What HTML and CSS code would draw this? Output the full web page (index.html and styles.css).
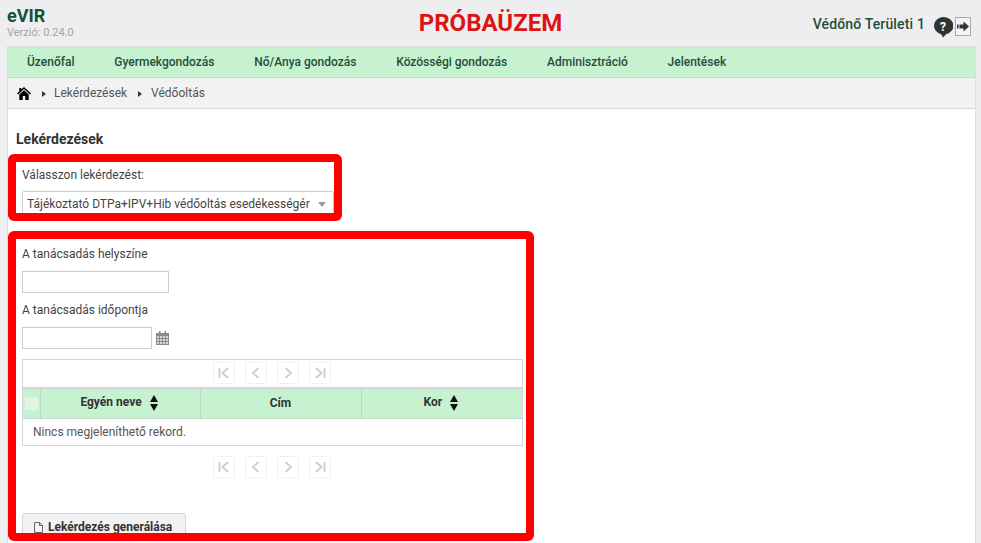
FILE: index.html
```html
<!DOCTYPE html>
<html lang="en">
<head>
    <meta charset="UTF-8">
    <meta name="viewport" content="width=device-width, initial-scale=1.0">
    <title>eVIR</title>
    <link rel="stylesheet" href="styles.css">
</head>
<body>
    <header class="top">
        <div class="brand">
            <div class="brand-name">eVIR</div>
            <div class="brand-version">Verzió: 0.24.0</div>
        </div>
        <div class="env">PRÓBAÜZEM</div>
        <div class="user">
            <span class="user-name">Védőnő Területi 1</span>
            <svg class="help" width="20" height="22" viewBox="0 0 20 22">
                <path d="M10 1a10 8.800 0 0 1 3 17.300L10 21.500l-1.800-3.300A10 8.800 0 0 1 10 1z" fill="#333"/>
                <text x="10" y="14.500" text-anchor="middle" class="help-mark">?</text>
            </svg>
            <span class="logout">
                <svg width="12" height="11" viewBox="0 0 12 11"><path d="M0 3.500h1.500v4H0zM2.500 3.500h4V.5L12 5.500l-5.500 5v-3h-4z" fill="#333"/></svg>
            </span>
        </div>
    </header>
    <div class="frame">
        <nav class="menu">
            <a>Üzenőfal</a>
            <a>Gyermekgondozás</a>
            <a>Nő/Anya gondozás</a>
            <a>Közösségi gondozás</a>
            <a>Adminisztráció</a>
            <a>Jelentések</a>
        </nav>
        <div class="crumbs">
            <svg width="14" height="13" viewBox="0 0 14 13"><path d="M7 0 14 6.500l-1 1L7 2 1 7.500l-1-1 2.300-2.200V1h2v1.400zM7 3.200l4.700 4.200V13H8.300V9H5.700v4H2.300V7.400z" fill="#000"/></svg>
            <span class="crumb-arrow"></span>
            <span>Lekérdezések</span>
            <span class="crumb-arrow crumb-arrow-last"></span>
            <span>Védőoltás</span>
        </div>
        <main class="content">
            <h2 class="title">Lekérdezések</h2>
            <section class="mark mark-select">
                <label class="field-label">Válasszon lekérdezést:</label>
                <div class="select">
                    <span>Tájékoztató DTPa+IPV+Hib védőoltás esedékességér</span>
                    <i class="select-arrow"></i>
                </div>
            </section>
            <section class="mark mark-form">
                <label class="field-label">A tanácsadás helyszíne</label>
                <input class="text-input" type="text">
                <label class="field-label second">A tanácsadás időpontja</label>
                <div class="date-row">
                    <input class="text-input date-input" type="text">
                    <svg width="13" height="14" viewBox="0 0 13 14">
                        <path d="M0 2h13v12H0z" fill="#8a8a8a"/>
                        <path d="M3 0h1.500v3H3zM8.500 0H10v3H8.500z" fill="#8a8a8a"/>
                        <path d="M1 5h2v2H1zM4 5h2v2H4zM7 5h2v2H7zM10 5h2v2h-2zM1 8h2v2H1zM4 8h2v2H4zM7 8h2v2H7zM10 8h2v2h-2zM1 11h2v2H1zM4 11h2v2H4zM7 11h2v2H7zM10 11h2v2h-2z" fill="#d8d8d8"/>
                    </svg>
                </div>
                <div class="grid">
                    <div class="pager">
                        <span class="page-btn"><svg width="14" height="12" viewBox="0 0 14 12"><path d="M2.500 1v10M11 1 5.500 6l5.500 5" /></svg></span>
                        <span class="page-btn"><svg width="14" height="12" viewBox="0 0 14 12"><path d="M9.500 1 4 6l5.500 5" /></svg></span>
                        <span class="page-btn"><svg width="14" height="12" viewBox="0 0 14 12"><path d="M4.500 1 10 6l-5.500 5" /></svg></span>
                        <span class="page-btn"><svg width="14" height="12" viewBox="0 0 14 12"><path d="M11.500 1v10M3 1l5.500 5L3 11" /></svg></span>
                    </div>
                    <table class="records">
                        <thead>
                            <tr>
                                <th class="col-check"><i class="check"></i></th>
                                <th class="col-name sortable">Egyén neve <svg class="sort" width="8" height="16" viewBox="0 0 8 16"><path d="M4 0 8 7H0zM0 9h8l-4 7z" fill="#111"/></svg></th>
                                <th class="col-addr">Cím</th>
                                <th class="sortable">Kor <svg class="sort" width="8" height="16" viewBox="0 0 8 16"><path d="M4 0 8 7H0zM0 9h8l-4 7z" fill="#111"/></svg></th>
                            </tr>
                        </thead>
                        <tbody>
                            <tr><td colspan="4">Nincs megjeleníthető rekord.</td></tr>
                        </tbody>
                    </table>
                </div>
                <div class="pager pager-bottom">
                    <span class="page-btn"><svg width="14" height="12" viewBox="0 0 14 12"><path d="M2.500 1v10M11 1 5.500 6l5.500 5" /></svg></span>
                    <span class="page-btn"><svg width="14" height="12" viewBox="0 0 14 12"><path d="M9.500 1 4 6l5.500 5" /></svg></span>
                    <span class="page-btn"><svg width="14" height="12" viewBox="0 0 14 12"><path d="M4.500 1 10 6l-5.500 5" /></svg></span>
                    <span class="page-btn"><svg width="14" height="12" viewBox="0 0 14 12"><path d="M11.500 1v10M3 1l5.500 5L3 11" /></svg></span>
                </div>
                <button class="generate">
                    <svg width="9" height="11" viewBox="0 0 9 11"><path d="M.5.500h5l3 3v7H.5zM5.500.500v3h3" fill="none" stroke="#666"/></svg>
                    Lekérdezés generálása
                </button>
            </section>
        </main>
    </div>
</body>
</html>
```

FILE: styles.css
```css
* {
    margin: 0;
    padding: 0;
    box-sizing: border-box;
}
html, body {
    height: 100%;
    overflow: hidden;
}
body {
    display: flex;
    flex-direction: column;
    font-family: Roboto, "Liberation Sans", sans-serif;
    font-size: 12px;
    color: #444;
    background-color: #eeeef0;
}
.top {
    height: 46px;
    flex: none;
    display: grid;
    grid-template-columns: 1fr auto 1fr;
    align-items: start;
    padding: 0 10px 0 7px;
}
.brand-name {
    margin-top: 7px;
    font-size: 18px;
    line-height: 18px;
    font-weight: 700;
    color: #14503a;
}
.brand-version {
    margin-top: 1px;
    font-size: 11px;
    line-height: 13px;
    color: #a3a3a3;
}
.env {
    margin: 9px 0 0 3px;
    font-size: 24px;
    line-height: 28px;
    font-weight: 700;
    color: #dd1414;
}
.user {
    display: flex;
    justify-content: flex-end;
    align-items: flex-start;
    padding-top: 16px;
}
.user-name {
    margin-right: 8px;
    font-size: 14px;
    line-height: 17px;
    font-weight: 500;
    letter-spacing: 0.15px;
    color: #1f4f3a;
}
.help-mark {
    font-family: Roboto, sans-serif;
    font-size: 12px;
    font-weight: 700;
    fill: #fff;
}
.logout {
    width: 16px;
    height: 19px;
    margin: 1px 0 0 2px;
    display: flex;
    align-items: center;
    justify-content: center;
    background-color: #f4f4f5;
    border: 1px solid #aaa;
}
.frame {
    flex: 1;
    margin: 0 5px 0 7px;
    display: flex;
    flex-direction: column;
    background-color: #fff;
    border: 1px solid #ddd;
    border-bottom: none;
}
.menu {
    height: 31px;
    flex: none;
    display: flex;
    align-items: center;
    gap: 39.800px;
    padding-left: 19px;
    background-color: #c6f2d0;
    border-bottom: 1px solid #c8d8cc;
}
.menu a {
    font-size: 12px;
    font-weight: 500;
    color: #1f4f3a;
}
.crumbs {
    height: 31px;
    flex: none;
    display: flex;
    align-items: center;
    gap: 8px;
    padding-left: 9px;
    color: #555;
    background-color: #f2f2f3;
    border-bottom: 1px solid #d9d9d9;
}
.crumb-arrow {
    width: 0;
    height: 0;
    margin: 1px 0 0 3px;
    border-left: 4px solid #333;
    border-top: 3.500px solid transparent;
    border-bottom: 3.500px solid transparent;
}
.crumb-arrow-last {
    margin-right: 1px;
}
.content {
    flex: 1;
    min-height: 0;
}
.title {
    margin: 22px 0 6px 8px;
    font-size: 14px;
    line-height: 17px;
    font-weight: 700;
    color: #333;
}
.mark {
    overflow: hidden;
    border: 8px solid #fe0000;
    border-radius: 6px;
    padding: 5px 0 0 6px;
}
.mark-select {
    width: 334px;
    height: 67px;
}
.mark-form {
    width: 526px;
    height: 310px;
    margin-top: 10px;
    padding-top: 7px;
}
.field-label {
    display: block;
    font-size: 12px;
    line-height: 17px;
    color: #444;
}
.field-label.second {
    margin-top: 9px;
}
.select {
    width: 312px;
    height: 26px;
    margin-top: 7px;
    display: flex;
    align-items: center;
    justify-content: space-between;
    padding: 0 7px 0 4px;
    font-size: 12px;
    border: 1px solid #ccc;
    border-radius: 2px;
}
.select-arrow {
    width: 0;
    height: 0;
    border-top: 5px solid #999;
    border-left: 4.500px solid transparent;
    border-right: 4.500px solid transparent;
}
.text-input {
    display: block;
    width: 147px;
    height: 22px;
    margin-top: 8px;
    border: 1px solid #ccc;
}
.date-row {
    display: flex;
    align-items: center;
    gap: 4px;
    margin-top: 8px;
}
.date-input {
    width: 130px;
    margin-top: 0;
}
.grid {
    width: 501px;
    margin-top: 10px;
    border: 1px solid #d5d5d5;
}
.pager {
    height: 27px;
    display: flex;
    justify-content: center;
    align-items: flex-start;
    gap: 10px;
    padding: 2px 2px 0 0;
}
.pager svg {
    fill: none;
    stroke: #ccc;
    stroke-width: 1.800;
}
.page-btn {
    width: 22px;
    height: 22px;
    display: flex;
    align-items: center;
    justify-content: center;
    border: 1px solid #f0f0f0;
    border-radius: 2px;
}
.pager-bottom {
    width: 501px;
    height: 22px;
    margin-top: 10px;
    padding-top: 0;
}
.records {
    width: 100%;
    border-collapse: collapse;
    table-layout: fixed;
}
.records th {
    height: 30px;
    font-size: 12px;
    font-weight: 700;
    color: #333;
    background-color: #c6f2d0;
    border-top: 2px solid #d5d5d5;
    border-left: 1px solid #b8d8c0;
    border-bottom: 1px solid #c5d5c9;
}
.records th:first-child {
    border-left: none;
}
.records th.sortable {
    padding-right: 2px;
}
.col-check {
    width: 17px;
}
.col-name {
    width: 160px;
}
.col-addr {
    width: 161px;
}
.check {
    display: block;
    width: 13px;
    height: 13px;
    margin: 0 auto;
    background-color: #dff6e4;
}
.sort {
    margin-left: 5px;
    vertical-align: middle;
}
.records td {
    height: 27px;
    padding-left: 10px;
    font-size: 12px;
    color: #555;
}
.generate {
    width: 164px;
    height: 30px;
    margin-top: 35px;
    display: flex;
    align-items: center;
    gap: 5px;
    padding: 0 0 2px 11px;
    font-family: inherit;
    font-size: 12px;
    font-weight: 700;
    color: #333;
    background-color: #f2f2f3;
    border: 1px solid #d5d5d5;
    border-radius: 3px;
}
```
